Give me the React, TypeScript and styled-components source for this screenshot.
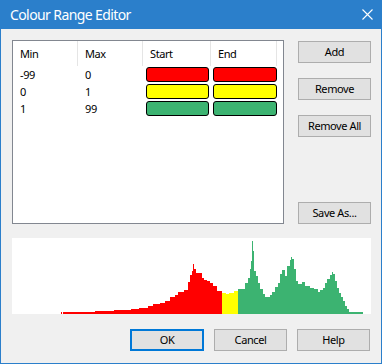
import { Fragment } from "react";
import styled, { createGlobalStyle } from "styled-components";

type TRange = {
    min: number,
    max: number,
    start: string,
    end: string
}

type TSegment = [number, number, number] // x from, x to, top (window coords)

const RED = "#ff0000"
const YELLOW = "#ffff00"
const GREEN = "#3cb371"

const RANGES: TRange[] = [
    { min: -99, max: 0, start: RED, end: RED },
    { min: 0, max: 1, start: YELLOW, end: YELLOW },
    { min: 1, max: 99, start: GREEN, end: GREEN },
]

// histogram, measured off the window: panel is x 12..371, y 237..313
const PANEL_X = 12
const PANEL_Y = 237
const PANEL_W = 359
const PANEL_H = 76

const HISTOGRAM: TSegment[] = [
    [61, 62, 311], [63, 95, 311], [95, 114, 310], [114, 131, 309], [131, 139, 308],
    [139, 148, 307], [148, 153, 305], [153, 160, 303], [160, 165, 302], [165, 170, 300],
    [170, 175, 296], [175, 178, 294], [178, 184, 291], [184, 188, 289], [188, 190, 281],
    [190, 192, 274], [192, 193, 270], [193, 194, 263], [194, 196, 268], [196, 202, 272],
    [202, 204, 277], [204, 207, 279], [207, 210, 280], [210, 213, 282], [213, 217, 285],
    [217, 222, 290],
    [222, 226, 292], [226, 229, 293], [229, 234, 292], [234, 238, 290],
    [238, 245, 288], [245, 248, 282], [248, 250, 277], [250, 251, 268], [251, 252, 260],
    [252, 253, 240], [253, 254, 250], [254, 256, 270], [256, 258, 275], [258, 260, 282],
    [260, 263, 288], [263, 265, 293], [265, 270, 296], [270, 272, 294], [272, 275, 291],
    [275, 278, 286], [278, 280, 282], [280, 282, 273], [282, 285, 269], [285, 287, 275],
    [287, 290, 265], [290, 291, 259], [291, 292, 256], [292, 294, 258], [294, 296, 268],
    [296, 298, 280], [298, 302, 283], [302, 305, 281], [305, 310, 285], [310, 314, 287],
    [314, 318, 288], [318, 320, 291], [320, 323, 289], [323, 325, 287], [325, 327, 282],
    [327, 330, 278], [330, 332, 274], [332, 333, 271], [333, 335, 273], [335, 337, 280],
    [337, 339, 287], [339, 341, 292], [341, 343, 296], [343, 345, 300], [345, 347, 305],
    [347, 349, 308], [349, 363, 311],
]

const colourAt = (x: number) => x < 222 ? RED : x < 238 ? YELLOW : GREEN

const GlobalStyle = createGlobalStyle`
    html, body {
        margin: 0;
        padding: 0;
        background: #ffffff;
    }
    body {
        font-family: "Noto Sans", "Liberation Sans", sans-serif;
        font-size: 11px;
        letter-spacing: -0.4px;
        color: #000000;
    }
`

const StyledWindow = styled.div`
    width: 382px;
    height: 364px;
    box-sizing: border-box;
    border: 1px solid #2b7fcb;
    border-top: none;
    background: #f0f0f0;
    display: flex;
    flex-direction: column;
`
const StyledTitleBar = styled.div`
    height: 28px;
    margin: 0 -1px;
    background: #2b7fcb;
    color: #ffffff;
    display: flex;
    align-items: center;
    justify-content: space-between;
    padding: 0 9px 1px 10px;
    font-size: 14px;
    letter-spacing: -0.6px;
`
const StyledClose = styled.svg`
    width: 11px;
    height: 11px;
`
const StyledBody = styled.div`
    flex: 1;
    display: flex;
    flex-direction: column;
    padding: 11px 10px 12px 11px;
`
const StyledTopRow = styled.div`
    display: flex;
    gap: 14px;
    height: 184px;
`
const StyledList = styled.div`
    width: 272px;
    box-sizing: border-box;
    border: 1px solid #828790;
    background: #ffffff;
    display: grid;
    grid-template-columns: 65px 65px 68px 66px;
    grid-template-rows: 25px;
    grid-auto-rows: 17px;
    align-content: start;
`
const StyledHeader = styled.div`
    box-sizing: border-box;
    border-right: 1px solid #e5e5e5;
    display: flex;
    align-items: center;
    padding-left: 7px;
`
const StyledCell = styled.div`
    display: flex;
    align-items: center;
    padding-left: 7px;
`
const StyledSwatchCell = styled.div<{ inset: number }>`
    display: flex;
    align-items: center;
    padding-left: ${({ inset }) => inset}px;
`
const StyledSwatch = styled.div<{ colour: string, width: number }>`
    width: ${({ width }) => width}px;
    height: 15px;
    box-sizing: border-box;
    border: 1px solid #000000;
    border-radius: 3px;
    background: ${({ colour }) => colour};
`
const StyledSideButtons = styled.div`
    display: flex;
    flex-direction: column;
    gap: 15px;
    padding-top: 1px;
`
const StyledButton = styled.button<{ isDefault?: boolean }>`
    width: ${({ isDefault }) => isDefault ? 74 : 73}px;
    height: 22px;
    box-sizing: border-box;
    margin: 0;
    padding: 0 0 1px;
    background: #e1e1e1;
    border: ${({ isDefault }) => isDefault ? '2px solid #0078d7' : '1px solid #adadad'};
    font-family: inherit;
    font-size: 11px;
    letter-spacing: -0.4px;
    color: #000000;
`
const StyledSaveButton = styled(StyledButton)`
    margin-top: auto;
`
const StyledHistogram = styled.div`
    margin-top: 14px;
    width: ${PANEL_W}px;
    height: ${PANEL_H}px;
    background: #ffffff;
`
const StyledFooter = styled.div`
    margin-top: auto;
    display: flex;
    justify-content: flex-end;
    gap: 10px;
    padding-right: 1px;
`

export default function App() {
    return (
        <>
            <GlobalStyle />
            <StyledWindow>
                <StyledTitleBar>
                    <span>Colour Range Editor</span>
                    <StyledClose viewBox="0 0 11 11">
                        <path d="M0.5 0.5 L10.5 10.5 M10.5 0.5 L0.5 10.5" stroke="#ffffff" strokeWidth="1.1" fill="none" />
                    </StyledClose>
                </StyledTitleBar>

                <StyledBody>
                    <StyledTopRow>
                        <StyledList>
                            <StyledHeader>Min</StyledHeader>
                            <StyledHeader>Max</StyledHeader>
                            <StyledHeader>Start</StyledHeader>
                            <StyledHeader>End</StyledHeader>
                            {RANGES.map((el, i) => (
                                <Fragment key={i}>
                                    <StyledCell>{el.min}</StyledCell>
                                    <StyledCell>{el.max}</StyledCell>
                                    <StyledSwatchCell inset={3}>
                                        <StyledSwatch colour={el.start} width={63} />
                                    </StyledSwatchCell>
                                    <StyledSwatchCell inset={2}>
                                        <StyledSwatch colour={el.end} width={64} />
                                    </StyledSwatchCell>
                                </Fragment>
                            ))}
                        </StyledList>

                        <StyledSideButtons>
                            <StyledButton>Add</StyledButton>
                            <StyledButton>Remove</StyledButton>
                            <StyledButton>Remove All</StyledButton>
                            <StyledSaveButton>Save As...</StyledSaveButton>
                        </StyledSideButtons>
                    </StyledTopRow>

                    <StyledHistogram>
                        <svg width={PANEL_W} height={PANEL_H} viewBox={`0 0 ${PANEL_W} ${PANEL_H}`} shapeRendering="crispEdges">
                            {HISTOGRAM.map(([x0, x1, top], i) => (
                                <rect
                                    key={i}
                                    x={x0 - PANEL_X}
                                    y={top - PANEL_Y}
                                    width={x1 - x0}
                                    height={PANEL_Y + PANEL_H - top}
                                    fill={colourAt(x0)}
                                />
                            ))}
                        </svg>
                    </StyledHistogram>

                    <StyledFooter>
                        <StyledButton isDefault>OK</StyledButton>
                        <StyledButton>Cancel</StyledButton>
                        <StyledButton>Help</StyledButton>
                    </StyledFooter>
                </StyledBody>
            </StyledWindow>
        </>
    )
}
